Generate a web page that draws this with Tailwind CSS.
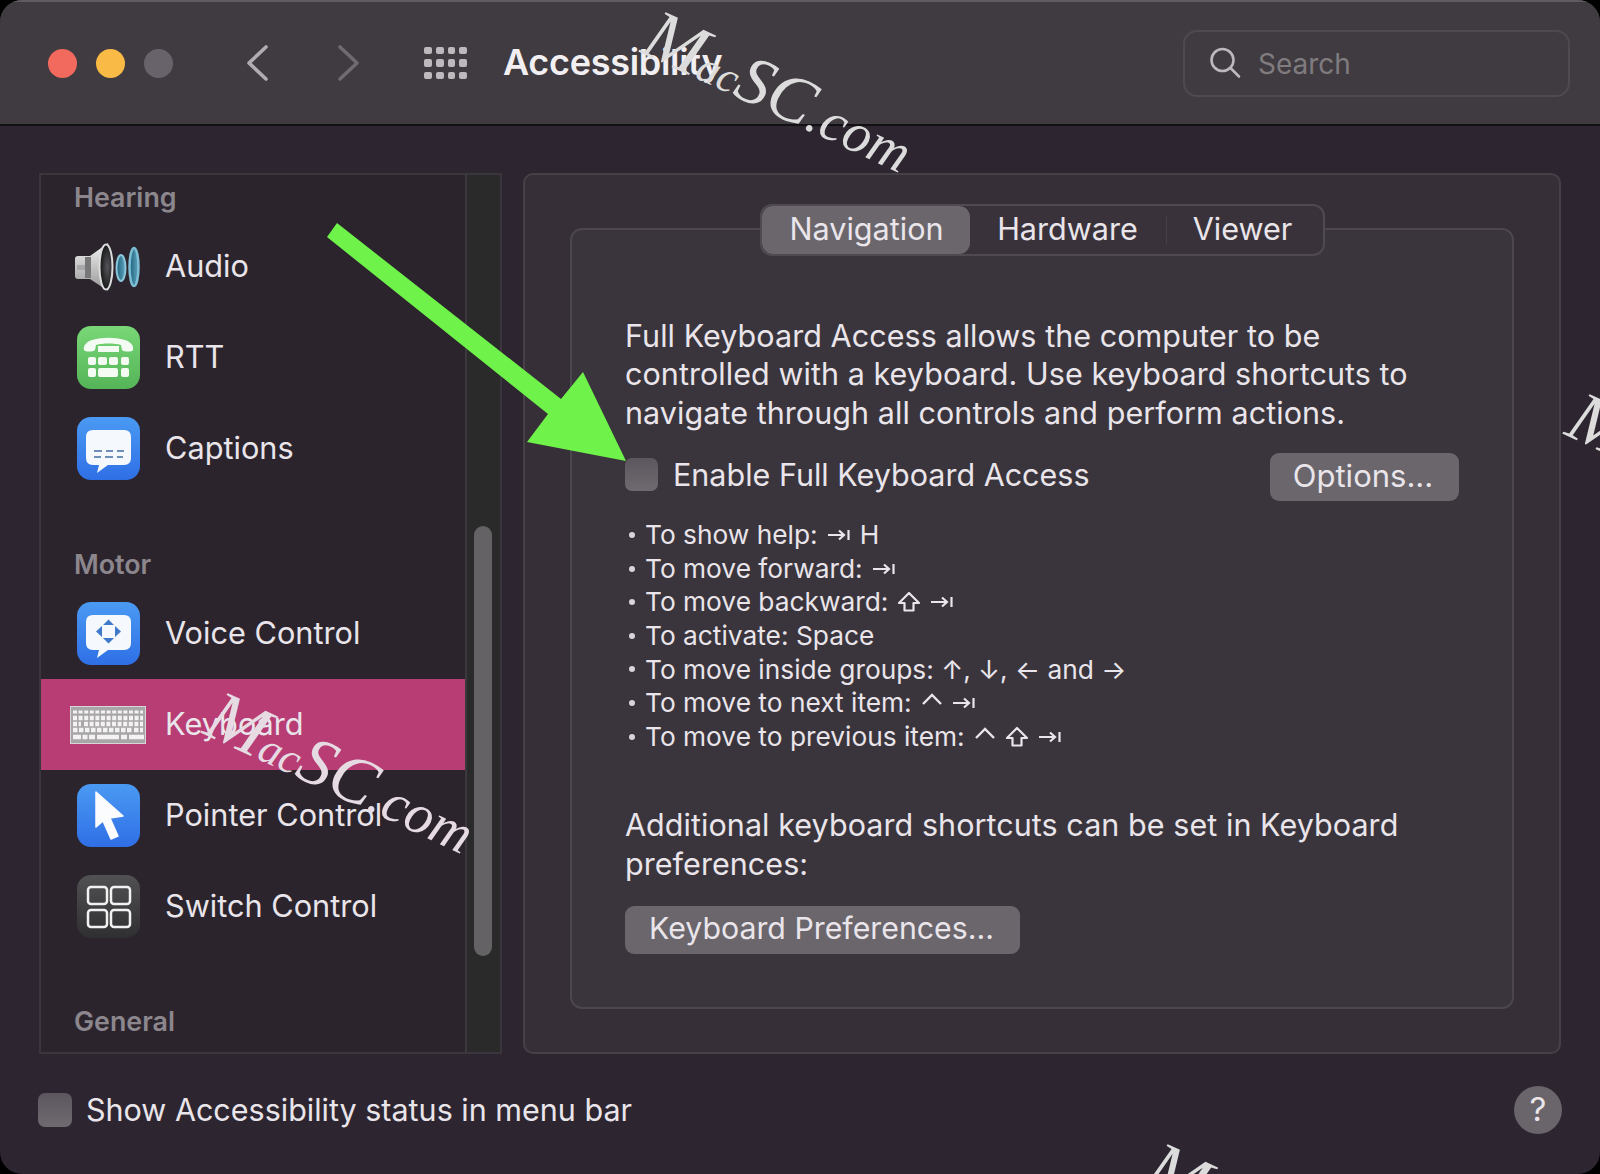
<!DOCTYPE html>
<html lang="en">
<head>
    <meta charset="UTF-8">
    <title>Accessibility</title>
    <script src="https://cdn.jsdelivr.net/npm/@tailwindcss/browser@4"></script>
</head>
<body class="bg-black">
    <svg class="hidden">
        <symbol id="tab-key" viewBox="0 0 24 14"><path d="M1 7h16M12 2.500 17 7l-5 4.500M21.500 2v10" fill="none" stroke="currentColor" stroke-width="2.200"/></symbol>
        <symbol id="shift-key" viewBox="0 0 24 22"><path d="M12 2 2 12h5.500v7.500h9V12H22Z" fill="none" stroke="currentColor" stroke-width="2.200" stroke-linejoin="round"/></symbol>
        <symbol id="ctrl-key" viewBox="0 0 22 14"><path d="M2 12 11 3l9 9" fill="none" stroke="currentColor" stroke-width="2.400"/></symbol>
    </svg>

    <div class="relative w-[1600px] h-[1174px] overflow-hidden font-[family-name:Inter,sans-serif] text-[#e9e5ea]">
        <div class="flex flex-col h-full bg-[#2d2530] rounded-[22px] overflow-hidden">

            <header class="flex items-center h-[126px] shrink-0 pl-[48px] pr-[30px] bg-[#403b40] border-t-2 border-t-[#5f5b5f] border-b-2 border-b-[#111013]">
                <div class="flex gap-[19px]">
                    <span class="w-[29px] h-[29px] rounded-full bg-[#f26a5e]"></span>
                    <span class="w-[29px] h-[29px] rounded-full bg-[#f9bb45]"></span>
                    <span class="w-[29px] h-[29px] rounded-full bg-[#68636a]"></span>
                </div>
                <svg class="ml-[72px] w-[24px] h-[38px]" viewBox="0 0 24 38" fill="none" stroke="#b0acb0" stroke-width="3.600" stroke-linecap="round" stroke-linejoin="round"><path d="M21 3 4 19l17 16"/></svg>
                <svg class="ml-[68px] w-[24px] h-[38px]" viewBox="0 0 24 38" fill="none" stroke="#6f6b6f" stroke-width="3.600" stroke-linecap="round" stroke-linejoin="round"><path d="M3 3l17 16L3 35"/></svg>
                <div class="ml-[63px] grid grid-cols-4 gap-x-[4px] gap-y-[5px] w-[43px]">
                    <span class="h-[7.500px] rounded-[2px] bg-[#bdb9bd]"></span><span class="h-[7.500px] rounded-[2px] bg-[#bdb9bd]"></span><span class="h-[7.500px] rounded-[2px] bg-[#bdb9bd]"></span><span class="h-[7.500px] rounded-[2px] bg-[#bdb9bd]"></span>
                    <span class="h-[7.500px] rounded-[2px] bg-[#bdb9bd]"></span><span class="h-[7.500px] rounded-[2px] bg-[#bdb9bd]"></span><span class="h-[7.500px] rounded-[2px] bg-[#bdb9bd]"></span><span class="h-[7.500px] rounded-[2px] bg-[#bdb9bd]"></span>
                    <span class="h-[7.500px] rounded-[2px] bg-[#bdb9bd]"></span><span class="h-[7.500px] rounded-[2px] bg-[#bdb9bd]"></span><span class="h-[7.500px] rounded-[2px] bg-[#bdb9bd]"></span><span class="h-[7.500px] rounded-[2px] bg-[#bdb9bd]"></span>
                </div>
                <h1 class="ml-[36px] -mt-[2px] text-[36px] font-semibold text-[#f2eff2] tracking-[-0.3px]">Accessibility</h1>
                <div class="ml-auto flex items-center w-[387px] h-[67px] rounded-[14px] border-2 border-[#4e4a4f] pl-[24px]">
                    <svg class="w-[32px] h-[32px]" viewBox="0 0 32 32" fill="none" stroke="#bcb8bc" stroke-width="2.600" stroke-linecap="round"><circle cx="13.500" cy="13" r="11"/><path d="M21.500 21 30 29.500"/></svg>
                    <span class="ml-[17px] mt-[2px] text-[28px] text-[#7f7b7f]">Search</span>
                </div>
            </header>

            <main class="flex gap-[21px] px-[39px] pt-[47px]">
                <aside class="relative w-[463px] h-[881px] shrink-0 bg-[#2b242d] border-2 border-[#3a363b] overflow-hidden">
                    <div class="pr-[35px]">
                        <h2 class="-mt-px h-[46px] flex items-center pl-[33px] text-[26.800px] font-semibold text-[#8c878d]">Hearing</h2>
                        <div class="mt-px flex items-center h-[91px] pl-[35px]">
                            <div class="flex justify-center w-[64px] shrink-0">
                                <svg class="w-[68px] h-[50px] overflow-visible" viewBox="0 0 68 50">
                                    <defs>
                                        <linearGradient id="cone" x1="0" y1="0" x2="0" y2="1"><stop offset="0" stop-color="#f2f2f2"/><stop offset="1" stop-color="#969696"/></linearGradient>
                                        <radialGradient id="driver" cx=".6" cy=".5" r=".6"><stop offset="0" stop-color="#55555a"/><stop offset="1" stop-color="#0f0f11"/></radialGradient>
                                        <linearGradient id="ring" x1="0" y1="0" x2="1" y2="0"><stop offset="0" stop-color="#1f5f78"/><stop offset="1" stop-color="#5fa6c2"/></linearGradient>
                                    </defs>
                                    <path d="M1 17q0-3 3-3h12L34 1q5 24 0 48L16 37H4q-3 0-3-3Z" fill="url(#cone)"/>
                                    <rect x="11" y="15" width="6" height="21" fill="#77777a"/>
                                    <rect x="3" y="23" width="8" height="5" fill="#a8a8aa"/>
                                    <ellipse cx="32" cy="25" rx="6.500" ry="22.500" fill="url(#driver)" stroke="#dcdcdc" stroke-width="2"/>
                                    <ellipse cx="47" cy="26" rx="4.500" ry="13" fill="url(#ring)" stroke="#8cc6da" stroke-width="2"/>
                                    <ellipse cx="60" cy="25" rx="4.500" ry="19" fill="url(#ring)" stroke="#7fbfd5" stroke-width="2.500"/>
                                </svg>
                            </div>
                            <span class="ml-[25px] text-[30.700px]">Audio</span>
                        </div>
                        <div class="flex items-center h-[91px] pl-[35px]">
                            <div class="flex justify-center w-[64px] shrink-0">
                                <svg class="w-[63px] h-[63px]" viewBox="0 0 63 63">
                                    <defs>
                                        <linearGradient id="green-tile" x1="0" y1="0" x2="0" y2="1"><stop offset="0" stop-color="#79d777"/><stop offset="1" stop-color="#54b457"/></linearGradient>
                                        <linearGradient id="blue-tile" x1="0" y1="0" x2="0" y2="1"><stop offset="0" stop-color="#4a9af3"/><stop offset="1" stop-color="#2f6fe6"/></linearGradient>
                                    </defs>
                                    <rect width="63" height="63" rx="14" fill="url(#green-tile)"/>
                                    <path d="M7 24c-1-4 2-8 8-10 11-3 22-3 33 0 6 2 9 6 8 10-1 2-9 2-11 0l-1-5c-6-2-19-2-25 0l-1 5c-2 2-10 2-11 0Z" fill="#f4fbf3"/>
                                    <path d="M21 20h21v6H21Z" fill="#f4fbf3"/>
                                    <g fill="#f4fbf3">
                                        <rect x="11" y="31" width="8" height="8" rx="2"/><rect x="21" y="31" width="9" height="8" rx="2"/><rect x="32" y="31" width="9" height="8" rx="2"/><rect x="44" y="31" width="8" height="8" rx="2"/>
                                        <rect x="11" y="42" width="8" height="9" rx="2"/><rect x="21" y="42" width="20" height="9" rx="2"/><rect x="44" y="42" width="8" height="9" rx="2"/>
                                    </g>
                                </svg>
                            </div>
                            <span class="ml-[25px] text-[30.700px]">RTT</span>
                        </div>
                        <div class="flex items-center h-[91px] pl-[35px]">
                            <div class="flex justify-center w-[64px] shrink-0">
                                <svg class="w-[63px] h-[63px]" viewBox="0 0 63 63">
                                    <rect width="63" height="63" rx="14" fill="url(#blue-tile)"/>
                                    <path d="M16 13h31q7 0 7 7v21q0 7-7 7H31l-11 8 2-8h-6q-7 0-7-7V20q0-7 7-7Z" fill="#f5f8fd"/>
                                    <path d="M17 34h8m4 0h7m4 0h7M17 40h7m4 0h8m4 0h6" stroke="#6d8fb8" stroke-width="2"/>
                                </svg>
                            </div>
                            <span class="ml-[25px] text-[30.700px]">Captions</span>
                        </div>

                        <h2 class="mt-[47px] h-[46px] flex items-center pl-[33px] text-[26.800px] font-semibold text-[#8c878d]">Motor</h2>
                        <div class="mt-px flex items-center h-[91px] pl-[35px]">
                            <div class="flex justify-center w-[64px] shrink-0">
                                <svg class="w-[63px] h-[63px]" viewBox="0 0 63 63">
                                    <rect width="63" height="63" rx="14" fill="url(#blue-tile)"/>
                                    <path d="M16 13h31q7 0 7 7v21q0 7-7 7H31l-11 8 2-8h-6q-7 0-7-7V20q0-7 7-7Z" fill="#f5f8fd"/>
                                    <path d="M26 23h11l-5.500-5.500ZM26 36h11l-5.500 5.500ZM25 24v11l-6-5.500ZM38 24v11l6-5.500Z" fill="#3f79c9"/>
                                </svg>
                            </div>
                            <span class="ml-[25px] text-[30.700px]">Voice Control</span>
                        </div>
                        <div class="flex items-center h-[91px] pl-[35px] bg-[#b73d74]">
                            <div class="flex justify-center w-[64px] shrink-0">
                                <svg class="w-[76px] h-[38px] shrink-0" viewBox="0 0 76 38">
                                    <rect width="76" height="38" rx="1.500" fill="#a9a6a8"/>
                                    <rect x=".5" y=".5" width="75" height="37" fill="none" stroke="#d8d6d7"/>
                                    <g fill="none" stroke="#f4f3f4" stroke-width="4.500">
                                        <path d="M3 6h70" stroke-width="3" stroke-dasharray="4 1.600"/>
                                        <path d="M3 12h70" stroke-dasharray="4 1.600"/>
                                        <path d="M3 18h8m3 0h59" stroke-dasharray="4 1.600"/>
                                        <path d="M3 24h11m1 0h48m1 0h9" stroke-dasharray="4.500 1.500"/>
                                        <path d="M3 31h8m1.500 0h5m1.500 0h6m2 0h22m2 0h6m2 0h15"/>
                                    </g>
                                </svg>
                            </div>
                            <span class="ml-[25px] text-[30.700px]">Keyboard</span>
                        </div>
                        <div class="flex items-center h-[91px] pl-[35px]">
                            <div class="flex justify-center w-[64px] shrink-0">
                                <svg class="w-[63px] h-[63px]" viewBox="0 0 63 63">
                                    <rect width="63" height="63" rx="14" fill="url(#blue-tile)"/>
                                    <path d="M19 8 46 32 33 34 41 52 34 55 26 37 19 43Z" fill="#fbfcfe" stroke="#fbfcfe" stroke-width="1.500" stroke-linejoin="round"/>
                                </svg>
                            </div>
                            <span class="ml-[25px] text-[30.700px]">Pointer Control</span>
                        </div>
                        <div class="flex items-center h-[91px] pl-[35px]">
                            <div class="flex justify-center w-[64px] shrink-0">
                                <svg class="w-[63px] h-[63px]" viewBox="0 0 63 63">
                                    <defs><linearGradient id="gray-tile" x1="0" y1="0" x2="0" y2="1"><stop offset="0" stop-color="#515053"/><stop offset="1" stop-color="#2f2f31"/></linearGradient></defs>
                                    <rect width="63" height="63" rx="14" fill="url(#gray-tile)"/>
                                    <g fill="none" stroke="#f2f1f2" stroke-width="2.500">
                                        <rect x="11" y="12" width="19" height="17" rx="3"/><rect x="34" y="12" width="19" height="17" rx="3"/>
                                        <rect x="11" y="35" width="19" height="17" rx="3"/><rect x="34" y="35" width="19" height="17" rx="3"/>
                                    </g>
                                </svg>
                            </div>
                            <span class="ml-[25px] text-[30.700px]">Switch Control</span>
                        </div>

                        <h2 class="mt-[46px] h-[46px] flex items-center pl-[33px] text-[26.800px] font-semibold text-[#8c878d]">General</h2>
                    </div>
                    <div class="absolute top-0 right-0 w-[35px] h-full bg-[#2b2a2b] border-l-2 border-[#3b393b]">
                        <div class="mt-[351px] ml-[7px] w-[18px] h-[430px] rounded-full bg-[#656266]"></div>
                    </div>
                </aside>

                <section class="w-[1038px] h-[881px] flex flex-col pt-[29px] pb-[43px] bg-[#362f38] border-2 border-[#454147] rounded-[10px]">
                    <div class="relative z-10 self-center flex items-center w-[565px] h-[52px] rounded-[12px] bg-[#39323b] border-2 border-[#4e4a50] text-[30.600px]">
                        <span class="flex items-center justify-center w-[208px] h-[48px] pb-[3px] pl-[2px] rounded-[11px] bg-[#6a666c]">Navigation</span>
                        <span class="flex items-center justify-center w-[196px] h-[48px] pb-[3px]">Hardware</span>
                        <span class="w-px h-[28px] bg-[#45404a]"></span>
                        <span class="flex items-center justify-center flex-1 h-[48px] pb-[3px] pr-[4px]">Viewer</span>
                    </div>
                    <div class="-mt-[28px] mx-[45px] flex-1 px-[53px] pt-[87px] bg-[#3a343c] border-2 border-[#4b474d] rounded-[12px]">
                        <p class="text-[30.500px] leading-[38.400px] tracking-[0.06px]">Full Keyboard Access allows the computer to be<br>controlled with a keyboard. Use keyboard shortcuts to<br>navigate through all controls and perform actions.</p>
                        <div class="mt-[21px] flex items-center h-[48px]">
                            <span class="-mt-[5px] w-[33px] h-[33px] rounded-[7px] bg-linear-to-b from-[#5c575e] to-[#6f6a70]"></span>
                            <span class="-mt-[4px] ml-[15px] text-[30.500px]">Enable Full Keyboard Access</span>
                            <button class="ml-auto w-[189px] h-[48px] pb-[4px] pr-[3px] rounded-[9px] bg-[#6a666c] text-[31px]">Options...</button>
                        </div>
                        <ul class="mt-[17px] text-[26.300px] leading-[33.600px]">
                            <li class="flex items-center gap-[9px]"><span class="ml-[4px] mr-[1px] w-[6px] h-[6px] rounded-full bg-[#d8d4d9]"></span><span>To show help:</span><svg class="w-[24px] h-[14px]"><use href="#tab-key"/></svg><span>H</span></li>
                            <li class="flex items-center gap-[9px]"><span class="ml-[4px] mr-[1px] w-[6px] h-[6px] rounded-full bg-[#d8d4d9]"></span><span>To move forward:</span><svg class="w-[24px] h-[14px]"><use href="#tab-key"/></svg></li>
                            <li class="flex items-center gap-[9px]"><span class="ml-[4px] mr-[1px] w-[6px] h-[6px] rounded-full bg-[#d8d4d9]"></span><span>To move backward:</span><svg class="w-[24px] h-[22px]"><use href="#shift-key"/></svg><svg class="w-[24px] h-[14px]"><use href="#tab-key"/></svg></li>
                            <li class="flex items-center gap-[9px]"><span class="ml-[4px] mr-[1px] w-[6px] h-[6px] rounded-full bg-[#d8d4d9]"></span><span>To activate: Space</span></li>
                            <li class="flex items-center gap-[9px]"><span class="ml-[4px] mr-[1px] w-[6px] h-[6px] rounded-full bg-[#d8d4d9]"></span><span>To move inside groups: ↑, ↓, ← and →</span></li>
                            <li class="flex items-center gap-[9px]"><span class="ml-[4px] mr-[1px] w-[6px] h-[6px] rounded-full bg-[#d8d4d9]"></span><span>To move to next item:</span><svg class="-mt-[8px] w-[22px] h-[14px]"><use href="#ctrl-key"/></svg><svg class="w-[24px] h-[14px]"><use href="#tab-key"/></svg></li>
                            <li class="flex items-center gap-[9px]"><span class="ml-[4px] mr-[1px] w-[6px] h-[6px] rounded-full bg-[#d8d4d9]"></span><span>To move to previous item:</span><svg class="-mt-[8px] w-[22px] h-[14px]"><use href="#ctrl-key"/></svg><svg class="w-[24px] h-[22px]"><use href="#shift-key"/></svg><svg class="w-[24px] h-[14px]"><use href="#tab-key"/></svg></li>
                        </ul>
                        <p class="mt-[53px] text-[30.500px] leading-[38.400px] tracking-[0.06px]">Additional keyboard shortcuts can be set in Keyboard<br>preferences:</p>
                        <button class="mt-[23px] w-[395px] h-[48px] pb-[4px] pr-[2px] rounded-[9px] bg-[#6a666c] text-[30.300px]">Keyboard Preferences...</button>
                    </div>
                </section>
            </main>

            <footer class="mt-[32px] flex items-center h-[48px] px-[38px]">
                <span class="w-[34px] h-[34px] rounded-[7px] bg-linear-to-b from-[#5c575e] to-[#6f6a70]"></span>
                <span class="ml-[14px] text-[30.500px]">Show Accessibility status in menu bar</span>
                <span class="ml-auto flex items-center justify-center w-[48px] h-[48px] rounded-full bg-[#69656b] text-[33px]">?</span>
            </footer>
        </div>

        <!-- annotation arrow and watermarks on top of the shot -->
        <svg class="absolute inset-0 w-[1600px] h-[1174px] pointer-events-none" viewBox="0 0 1600 1174">
            <path d="M337 223 561 399 583 372 626 461 527 442 548 414 327 237Z" fill="#6ff24a"/>
        </svg>
        <div class="absolute left-[672px] -top-[19px] origin-top-left rotate-[25deg] whitespace-nowrap font-[family-name:'Liberation_Serif',serif] italic text-[#dcdcdc] pointer-events-none"><span class="text-[72px]">M</span><span class="text-[44px]">ac</span><span class="text-[68px]">SC</span><span class="text-[56px]">.com</span></div>
        <div class="absolute left-[234px] top-[662px] origin-top-left rotate-[25deg] whitespace-nowrap font-[family-name:'Liberation_Serif',serif] italic text-[#e6dbe2] pointer-events-none"><span class="text-[72px]">M</span><span class="text-[44px]">ac</span><span class="text-[68px]">SC</span><span class="text-[56px]">.com</span></div>
        <div class="absolute left-[1596px] top-[363px] origin-top-left rotate-[25deg] whitespace-nowrap font-[family-name:'Liberation_Serif',serif] italic text-[#dcdcdc] pointer-events-none"><span class="text-[72px]">M</span></div>
        <div class="absolute left-[1174px] top-[1113px] origin-top-left rotate-[25deg] whitespace-nowrap font-[family-name:'Liberation_Serif',serif] italic text-[#dcdcdc] pointer-events-none"><span class="text-[72px]">M</span></div>
    </div>
</body>
</html>
